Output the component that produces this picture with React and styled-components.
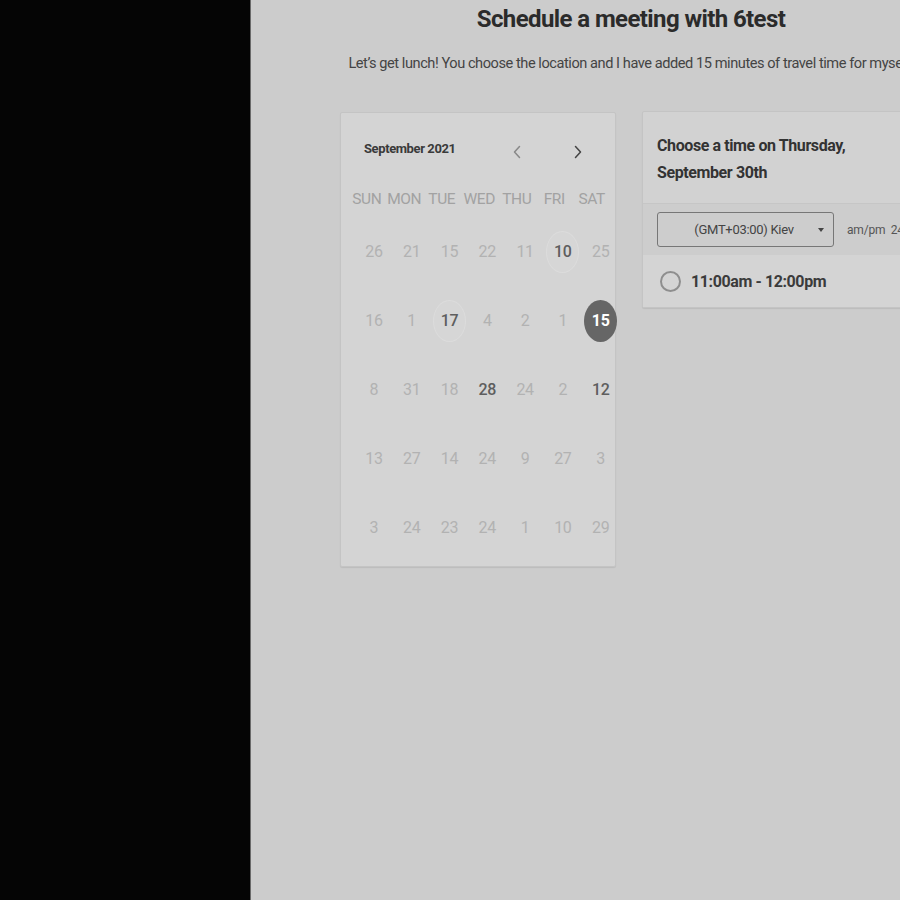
import React from "react";
import styled, { createGlobalStyle } from "styled-components";

const Global = createGlobalStyle`
  html, body { margin: 0; padding: 0; background: #050505; overflow: hidden; }
  body { font-family: Roboto, "Liberation Sans", sans-serif; }
`;

const Page = styled.div`
  display: flex;
  width: 900px;
  height: 900px;
  overflow: hidden;
`;

const Side = styled.div`
  flex: 0 0 250px;
  background: #050505;
  border-right: 1px solid #6a6a6a;
`;

const Main = styled.main`
  flex: 0 0 760px;
  background: #cccccc;
  display: flex;
  flex-direction: column;
  align-items: center;
`;

const Title = styled.h1`
  margin: 4px 0 0;
  font-size: 24px;
  font-weight: 700;
  letter-spacing: -0.6px;
  color: #2b2b2b;
  line-height: 30px;
`;

const Subtitle = styled.p`
  margin: 19px 0 0;
  font-size: 14.6px;
  letter-spacing: -0.45px;
  color: #444;
  white-space: nowrap;
  line-height: 20px;
`;

const Columns = styled.div`
  display: flex;
  align-self: flex-start;
  margin: 39px 0 0 89px;
  gap: 26px;
  align-items: flex-start;
`;

const CalCard = styled.section`
  width: 276px;
  height: 455px;
  background: #d4d4d4;
  border: 1px solid #c4c4c4;
  border-radius: 2px;
  box-shadow: 0 1px 1px rgba(0,0,0,0.08);
  box-sizing: border-box;
  padding: 0 0 0 7px;
`;

const CalHeader = styled.div`
  display: flex;
  align-items: center;
  height: 70px;
  padding: 0 0 0 16px;
`;

const Month = styled.div`
  font-size: 13px;
  font-weight: 700;
  letter-spacing: -0.4px;
  color: #3a3a3a;
  flex: 1;
`;

const Arrow = styled.button`
  background: none;
  border: none;
  padding: 0;
  width: 16px;
  height: 20px;
  display: flex;
  align-items: center;
  justify-content: center;
  margin-top: 8px;
  margin-right: ${p => p.$mr}px;
  color: ${p => (p.$dark ? "#444" : "#888")};
`;

const WeekGrid = styled.div`
  display: grid;
  grid-template-columns: repeat(7, 37.5px);
  margin-top: 5px;
`;

const DayGrid = styled.div`
  display: grid;
  grid-template-columns: repeat(7, 37.8px);
  margin: 7px 0 0 7px;
`;

const WeekDay = styled.div`
  text-align: center;
  font-size: 15.5px;
  color: #a2a2a2;
  letter-spacing: -0.4px;
  height: 22px;
  line-height: 22px;
`;

const Cell = styled.div`
  height: 69px;
  display: flex;
  align-items: center;
  justify-content: center;
`;

const Day = styled.div`
  width: 33px;
  height: 42px;
  border-radius: 50%;
  display: flex;
  align-items: center;
  justify-content: center;
  font-size: 16px;
  letter-spacing: -0.3px;
  box-sizing: border-box;
  color: ${p => (p.$sel ? "#fff" : p.$on ? "#5e5e5e" : "#b2b2b2")};
  font-weight: ${p => (p.$sel ? 700 : p.$on ? 500 : 400)};
  background: ${p => (p.$sel ? "#666" : p.$ring ? "#d6d6d6" : "transparent")};
  border: 1px solid ${p => (p.$ring ? "#dcdcdc" : "transparent")};
`;

const TimeCard = styled.section`
  width: 300px;
  margin-top: -1px;
  background: #d2d2d2;
  border: 1px solid #c4c4c4;
  border-radius: 2px;
  box-shadow: 0 1px 1px rgba(0,0,0,0.08);
  box-sizing: border-box;
`;

const TimeHeader = styled.div`
  padding: 20px 14px 17px;
  border-bottom: 1px solid #c6c6c6;
  font-size: 16px;
  font-weight: 700;
  letter-spacing: -0.4px;
  line-height: 27px;
  color: #333;
`;

const ZoneRow = styled.div`
  display: flex;
  align-items: center;
  gap: 13px;
  height: 51px;
  padding: 0 14px;
  background: #cdcdcd;
`;

const Select = styled.div`
  width: 177px;
  height: 35px;
  border: 1px solid #777;
  border-radius: 3px;
  box-sizing: border-box;
  display: flex;
  align-items: center;
  padding: 0 9px 0 0;
  font-size: 13px;
  letter-spacing: -0.3px;
  color: #444;
`;

const SelectText = styled.span`
  flex: 1;
  text-align: center;
  padding-left: 12px;
`;

const Caret = styled.span`
  width: 0;
  height: 0;
  border-left: 3px solid transparent;
  border-right: 3px solid transparent;
  border-top: 4px solid #444;
`;

const Toggle = styled.span`
  font-size: 12px;
  color: #555;
  letter-spacing: -0.2px;
  white-space: nowrap;
`;

const SlotRow = styled.div`
  display: flex;
  align-items: center;
  height: 52px;
  padding: 0 0 0 17px;
  gap: 10px;
  background: #d4d4d4;
`;

const Radio = styled.span`
  width: 21px;
  height: 21px;
  border-radius: 50%;
  border: 2px solid #8e8e8e;
  box-sizing: border-box;
`;

const SlotText = styled.span`
  font-size: 16px;
  font-weight: 700;
  letter-spacing: -0.4px;
  color: #3b3b3b;
`;

const Chevron = ({ dir }) => (
  <svg width="10" height="14" viewBox="0 0 10 14" fill="none">
    <path
      d={dir === "left" ? "M7.5 1.5 L2.5 7 L7.5 12.5" : "M2.5 1.5 L7.5 7 L2.5 12.5"}
      stroke="currentColor"
      strokeWidth="1.5"
      strokeLinecap="round"
      strokeLinejoin="round"
    />
  </svg>
);

const weekdays = ["SUN", "MON", "TUE", "WED", "THU", "FRI", "SAT"];

const days = [
  [{ n: 26 }, { n: 21 }, { n: 15 }, { n: 22 }, { n: 11 }, { n: 10, on: true, ring: true }, { n: 25 }],
  [{ n: 16 }, { n: 1 }, { n: 17, on: true, ring: true }, { n: 4 }, { n: 2 }, { n: 1 }, { n: 15, sel: true }],
  [{ n: 8 }, { n: 31 }, { n: 18 }, { n: 28, on: true }, { n: 24 }, { n: 2 }, { n: 12, on: true }],
  [{ n: 13 }, { n: 27 }, { n: 14 }, { n: 24 }, { n: 9 }, { n: 27 }, { n: 3 }],
  [{ n: 3 }, { n: 24 }, { n: 23 }, { n: 24 }, { n: 1 }, { n: 10 }, { n: 29 }],
];

export default function App() {
  return (
    <>
      <Global />
      <Page>
        <Side />
        <Main>
          <Title>Schedule a meeting with 6test</Title>
          <Subtitle>
            Let’s get lunch! You choose the location and I have added 15 minutes of travel time for myself.
          </Subtitle>
          <Columns>
            <CalCard>
              <CalHeader>
                <Month>September 2021</Month>
                <Arrow $mr={45}><Chevron dir="left" /></Arrow>
                <Arrow $mr={29} $dark><Chevron dir="right" /></Arrow>
              </CalHeader>
              <WeekGrid>
                {weekdays.map(w => (
                  <WeekDay key={w}>{w}</WeekDay>
                ))}
              </WeekGrid>
              <DayGrid>
                {days.flat().map((d, i) => (
                  <Cell key={i}>
                    <Day $on={d.on} $ring={d.ring} $sel={d.sel}>{d.n}</Day>
                  </Cell>
                ))}
              </DayGrid>
            </CalCard>
            <TimeCard>
              <TimeHeader>
                Choose a time on Thursday,
                <br />
                September 30th
              </TimeHeader>
              <ZoneRow>
                <Select>
                  <SelectText>(GMT+03:00) Kiev</SelectText>
                  <Caret />
                </Select>
                <Toggle>am/pm&nbsp;&nbsp;24h</Toggle>
              </ZoneRow>
              <SlotRow>
                <Radio />
                <SlotText>11:00am - 12:00pm</SlotText>
              </SlotRow>
            </TimeCard>
          </Columns>
        </Main>
      </Page>
    </>
  );
}
